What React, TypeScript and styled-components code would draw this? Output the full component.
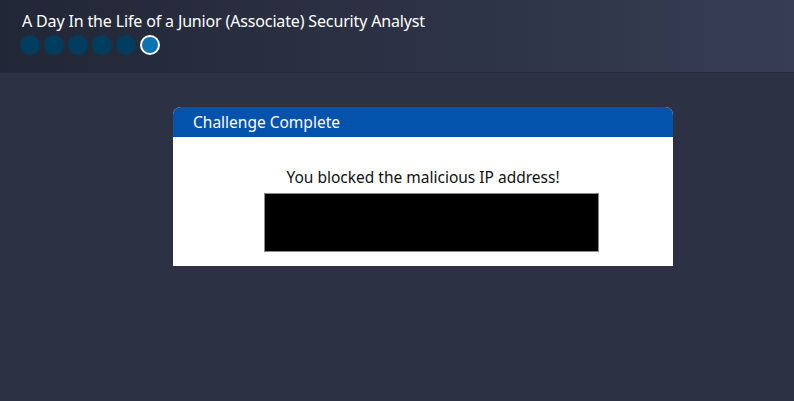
import React from "react";
import styled, { createGlobalStyle } from "styled-components";

const Global = createGlobalStyle`
  html, body { margin: 0; padding: 0; }
  body {
    background: #2c3244;
    font-family: "Noto Sans", "Open Sans", sans-serif;
    width: 794px;
    height: 401px;
    overflow: hidden;
  }
`;

const Page = styled.div`
  display: flex;
  flex-direction: column;
  height: 401px;
`;

const Header = styled.header`
  height: 73px;
  box-sizing: border-box;
  padding: 10px 20px 0 22px;
  background: linear-gradient(90deg, #222737 0%, #2e3447 60%, #373d53 100%);
  border-bottom: 1px solid #262b3c;
  display: flex;
  flex-direction: column;
  gap: 3px;
`;

const Title = styled.h1`
  margin: 0;
  color: #ffffff;
  font-size: 16px;
  font-weight: 400;
  line-height: 22px;
  letter-spacing: -0.15px;
`;

const Dots = styled.div`
  display: flex;
  gap: 4px;
  margin-left: -2px;
`;

const Dot = styled.span<{ $active?: boolean }>`
  width: 20px;
  height: 20px;
  box-sizing: border-box;
  border-radius: 50%;
  background: ${(p) => (p.$active ? "#0a74b3" : "#013d5e")};
  border: ${(p) => (p.$active ? "2px solid #ffffff" : "none")};
`;

const Main = styled.main`
  display: flex;
  justify-content: center;
  padding: 34px 0 0 52px;
`;

const Card = styled.section`
  width: 500px;
  background: #ffffff;
  border-radius: 8px 8px 0 0;
  overflow: hidden;
`;

const CardHeader = styled.div`
  height: 30px;
  background: #0353ad;
  color: #ffffff;
  font-size: 15.5px;
  line-height: 30px;
  padding-left: 20px;
`;

const CardBody = styled.div`
  display: flex;
  flex-direction: column;
  align-items: center;
  padding: 29px 0 14px;
  gap: 5px;
`;

const Message = styled.p`
  margin: 0;
  color: #111111;
  font-size: 15.5px;
  line-height: 22px;
`;

const BlackBox = styled.div`
  width: 335px;
  height: 59px;
  margin-left: 16px;
  box-sizing: border-box;
  background: #000000;
  border: 1px solid #8a8a8a;
`;

export default function App() {
  const steps = [false, false, false, false, false, true];
  return (
    <Page>
      <Global />
      <Header>
        <Title>A Day In the Life of a Junior (Associate) Security Analyst</Title>
        <Dots>
          {steps.map((a, i) => (
            <Dot key={i} $active={a} />
          ))}
        </Dots>
      </Header>
      <Main>
        <Card>
          <CardHeader>Challenge Complete</CardHeader>
          <CardBody>
            <Message>You blocked the malicious IP address!</Message>
            <BlackBox />
          </CardBody>
        </Card>
      </Main>
    </Page>
  );
}
